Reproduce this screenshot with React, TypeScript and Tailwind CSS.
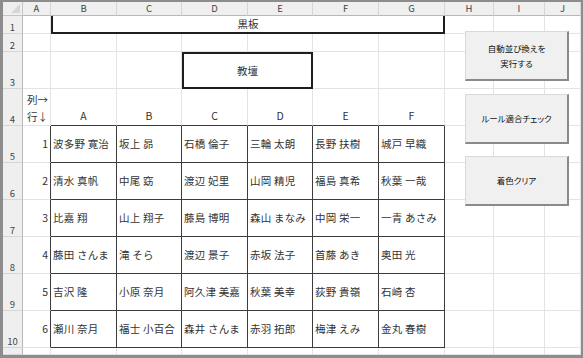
import React from "react";

const names = [
  ["波多野 寛治", "坂上 昴", "石橋 倫子", "三輪 太朗", "長野 扶樹", "城戸 早織"],
  ["清水 真帆", "中尾 窈", "渡辺 妃里", "山岡 精児", "福島 真希", "秋葉 一哉"],
  ["比嘉 翔", "山上 翔子", "藤島 博明", "森山 まなみ", "中岡 栄一", "一青 あさみ"],
  ["藤田 さんま", "滝 そら", "渡辺 景子", "赤坂 法子", "首藤 あき", "奥田 光"],
  ["吉沢 隆", "小原 奈月", "阿久津 美嘉", "秋葉 美幸", "荻野 貴嶺", "石崎 杏"],
  ["瀬川 奈月", "福士 小百合", "森井 さんま", "赤羽 拓郎", "梅津 えみ", "金丸 春樹"],
];

const cols = ["A", "B", "C", "D", "E", "F", "G", "H", "I", "J"];
const rows = [1, 2, 3, 4, 5, 6, 7, 8, 9, 10, 11];

function Cell({ r, c }: { r: number; c: number }) {
  // r: sheet row (1..11), c: column index 0..9 (A..J)
  const inTable = r >= 5 && r <= 10 && c >= 1 && c <= 6;
  let cls = "border-r border-b border-[#e3e3e3]";
  if (inTable) cls = "border-r border-b border-[#3c3c3c]";
  else if (r === 4 && c >= 1 && c <= 6) cls = "border-r border-r-[#e3e3e3] border-b border-b-[#3c3c3c]";
  else if (r >= 5 && r <= 10 && c === 0) cls = "border-r border-r-[#3c3c3c] border-b border-b-[#e3e3e3]";

  let content: React.ReactNode = null;
  if (inTable) {
    content = (
      <div className="flex h-full items-center pl-[2px] whitespace-nowrap tracking-[0.2px]">{names[r - 5][c - 1]}</div>
    );
  } else if (r >= 5 && r <= 10 && c === 0) {
    content = <div className="flex h-full items-center justify-end pr-[2px]">{r - 4}</div>;
  } else if (r === 4 && c >= 1 && c <= 6) {
    content = <div className="flex h-full items-end justify-center pb-[1px]">{cols[c - 1]}</div>;
  } else if (r === 4 && c === 0) {
    content = (
      <div className="flex h-full flex-col justify-end pl-[4px] leading-[17px]">
        <span>列→</span>
        <span>行↓</span>
      </div>
    );
  }

  return (
    <div className={cls} style={{ gridRow: r + 1, gridColumn: c + 2 }}>
      {content}
    </div>
  );
}

function SheetButton({ top, children }: { top: string; children: React.ReactNode }) {
  return (
    <div
      className={`absolute left-[462px] ${top} flex h-[50px] w-[104px] flex-col items-center justify-center border border-t-[#d9d9d9] border-l-[#d9d9d9] border-r-2 border-b-2 border-r-[#8a8a8a] border-b-[#8a8a8a] bg-[#f0f0f0] text-[8.5px] leading-[15px] text-[#111] [font-feature-settings:'palt']`}
    >
      {children}
    </div>
  );
}

export default function App() {
  return (
    <div className="h-[358px] w-[583px] overflow-hidden border-t-2 border-l-[3px] border-r-2 border-b-[3px] border-[#8d8d8d] bg-white font-['Noto_Sans_CJK_JP',sans-serif] text-[10.5px] text-[#333]">
      <div className="relative grid grid-cols-[20px_28px_66px_65px_66px_65px_66px_66px_49px_51px_36px] grid-rows-[14px_18px_18px_37px_37px_37px_37px_37px_37px_37px_37px_7px]">
        {/* corner */}
        <div className="relative border-r border-b border-[#c4c4c4] bg-[#efefef]" style={{ gridRow: 1, gridColumn: 1 }}>
          <svg className="absolute right-[2px] bottom-[2px]" width="9" height="9" viewBox="0 0 9 9">
            <polygon points="9,0 9,9 0,9" fill="#d6d6d6" />
          </svg>
        </div>
        {/* column headers */}
        {cols.map((l, i) => (
          <div
            key={l}
            className="flex items-center justify-center border-r border-r-[#d6d6d6] border-b border-b-[#b8b8b8] bg-[#efefef] text-[9.5px] leading-none text-[#444]"
            style={{ gridRow: 1, gridColumn: i + 2 }}
          >
            {l}
          </div>
        ))}
        {/* row headers */}
        {rows.map((n) => (
          <div
            key={n}
            className="flex items-end justify-center border-r border-r-[#b8b8b8] border-b border-b-[#d6d6d6] bg-[#efefef] pb-[1px] text-[9.5px] leading-none text-[#444]"
            style={{ gridRow: n + 1, gridColumn: 1 }}
          >
            {n <= 10 ? n : ""}
          </div>
        ))}
        {/* cells */}
        {rows.map((r) => cols.map((_, c) => <Cell key={`${r}-${c}`} r={r} c={c} />))}

        {/* 黒板 B1:G1 */}
        <div className="col-start-3 col-end-9 row-start-2 row-end-3 flex items-center justify-center border-x-2 border-b-2 border-[#1e1e1e] bg-white">
          黒板
        </div>
        {/* 教壇 D3:E3 */}
        <div className="col-start-5 col-end-7 row-start-4 row-end-5 flex items-center justify-center border-2 border-[#1e1e1e] bg-white">
          教壇
        </div>

        <SheetButton top="top-[29px]">
          <span>自動並び換えを</span>
          <span>実行する</span>
        </SheetButton>
        <SheetButton top="top-[92px]">
          <span>ルール適合チェック</span>
        </SheetButton>
        <SheetButton top="top-[154px]">
          <span>着色クリア</span>
        </SheetButton>
      </div>
    </div>
  );
}
